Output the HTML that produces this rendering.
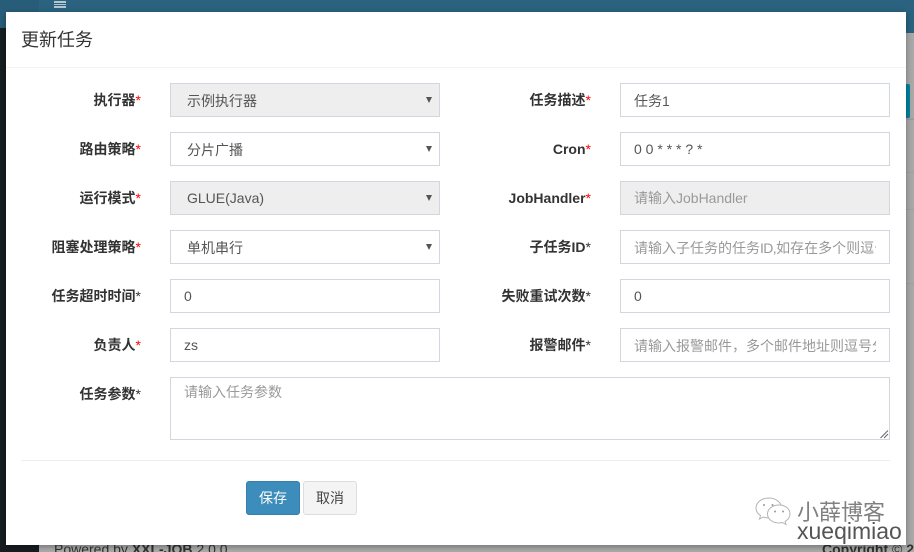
<!DOCTYPE html>
<html lang="zh">
<head>
<meta charset="utf-8">
<title>更新任务</title>
<style>
html,body{margin:0;padding:0;width:914px;height:552px;overflow:hidden;background:#adadad}
body{position:relative;font-family:"Liberation Sans","Noto Sans CJK SC",sans-serif;font-size:14px;color:#333}
div,span{box-sizing:border-box}
.a{position:absolute}
.modal{position:absolute;left:6px;top:12px;width:900px;height:533px;background:#fff;box-shadow:0 2px 6px rgba(0,0,0,.35)}
.lb{position:absolute;width:125px;height:20px;line-height:20px;text-align:right;font-weight:bold;color:#333;font-size:14px;white-space:nowrap}
.lb i{font-style:normal;color:#f00;font-weight:normal}
.lb b{font-weight:normal}
.f{position:absolute;width:270px;height:34px;border:1px solid #d2d6de;background:#fff;color:#555;line-height:32px;padding:0 13px;white-space:nowrap;overflow:hidden}
.f span{display:block;overflow:hidden;height:32px}
.f span.c{position:relative;top:1px}
.f.s{padding-left:16px}
.f.d{background:#eee}
.ph{color:#999}
.ar{position:absolute;right:7px;top:13px;width:0;height:0;border-left:3px solid transparent;border-right:3px solid transparent;border-top:6px solid #555}
</style>
</head>
<body>
<!-- background page -->
<div class="a" style="left:0;top:0;width:914px;height:33px;background:#2a627f"></div>
<div class="a" style="left:0;top:0;width:39px;height:28px;background:#285d79"></div>
<div class="a" style="left:0;top:28px;width:39px;height:524px;background:#171d20"></div>
<div class="a" style="left:54px;top:1px;width:12px;height:2px;background:#b5c6d0"></div>
<div class="a" style="left:54px;top:4px;width:12px;height:1px;background:#b5c6d0"></div>
<div class="a" style="left:54px;top:6px;width:12px;height:2px;background:#b5c6d0"></div>
<div class="a" style="left:906px;top:33px;width:8px;height:519px;background:#a9a9a9"></div>
<div class="a" style="left:906px;top:84px;width:4px;height:34px;background:#00829f;border-radius:0 2px 2px 0"></div>
<div class="a" style="left:906px;top:118px;width:8px;height:2px;background:#9d9d9d"></div>
<div class="a" style="left:906px;top:172px;width:8px;height:1px;background:#a0a0a0"></div>
<div class="a" style="left:906px;top:209px;width:8px;height:1px;background:#a0a0a0"></div>
<div class="a" style="left:906px;top:283px;width:8px;height:1px;background:#a0a0a0"></div>
<div class="a" style="left:54px;top:539px;font-size:14px;line-height:20px;color:#333;white-space:nowrap">Powered by <b>XXL-JOB</b> 2.0.0</div>
<div class="a" style="left:822px;top:539px;font-size:14px;line-height:20px;color:#333;white-space:nowrap"><b>Copyright</b> © <b>2</b></div>

<div class="modal"></div>

<div class="a" style="left:21px;top:27px;font-size:18px;line-height:26px;color:#333">更新任务</div>
<div class="a" style="left:6px;top:67px;width:900px;height:1px;background:#f4f4f4"></div>

<!-- left labels -->
<div class="lb" style="left:16px;top:90px">执行器<i>*</i></div>
<div class="lb" style="left:16px;top:139px">路由策略<i>*</i></div>
<div class="lb" style="left:16px;top:188px">运行模式<i>*</i></div>
<div class="lb" style="left:16px;top:237px">阻塞处理策略<i>*</i></div>
<div class="lb" style="left:16px;top:286px">任务超时时间<b>*</b></div>
<div class="lb" style="left:16px;top:335px">负责人<i>*</i></div>
<div class="lb" style="left:16px;top:384px">任务参数<b>*</b></div>

<!-- right labels -->
<div class="lb" style="left:466px;top:90px">任务描述<i>*</i></div>
<div class="lb" style="left:466px;top:139px">Cron<i>*</i></div>
<div class="lb" style="left:466px;top:188px">JobHandler<i>*</i></div>
<div class="lb" style="left:466px;top:237px">子任务ID<b>*</b></div>
<div class="lb" style="left:466px;top:286px">失败重试次数<b>*</b></div>
<div class="lb" style="left:466px;top:335px">报警邮件<b>*</b></div>

<!-- left fields -->
<div class="f s d" style="left:170px;top:83px"><span class="c">示例执行器</span><div class="ar"></div></div>
<div class="f s" style="left:170px;top:132px"><span class="c">分片广播</span><div class="ar"></div></div>
<div class="f s d" style="left:170px;top:181px"><span>GLUE(Java)</span><div class="ar"></div></div>
<div class="f s" style="left:170px;top:230px"><span class="c">单机串行</span><div class="ar"></div></div>
<div class="f" style="left:170px;top:279px"><span>0</span></div>
<div class="f" style="left:170px;top:328px"><span>zs</span></div>

<!-- right fields -->
<div class="f" style="left:620px;top:83px"><span class="c">任务1</span></div>
<div class="f" style="left:620px;top:132px"><span>0 0 * * * ? *</span></div>
<div class="f d" style="left:620px;top:181px"><span class="ph">请输入JobHandler</span></div>
<div class="f" style="left:620px;top:230px"><span class="ph c">请输入子任务的任务<u style="text-decoration:none;letter-spacing:-.6px">ID,</u>如存在多个则逗号分隔</span></div>
<div class="f" style="left:620px;top:279px"><span>0</span></div>
<div class="f" style="left:620px;top:328px"><span class="ph c">请输入报警邮件，多个邮件地址则逗号分隔</span></div>

<!-- textarea -->
<div class="f" style="left:170px;top:377px;width:720px;height:63px;line-height:20px;padding-top:4px"><span class="ph" style="height:20px">请输入任务参数</span>
<svg class="a" style="right:0;bottom:0" width="10" height="10" viewBox="0 0 10 10"><path d="M1.5 9 L9 1.5 M5 9 L9 5" stroke="#666" stroke-width="1" fill="none"/></svg></div>

<!-- footer -->
<div class="a" style="left:21px;top:460px;width:869px;height:1px;background:#eee"></div>
<div class="a" style="left:246px;top:481px;width:54px;height:34px;background:#3c8dbc;border:1px solid #367fa9;border-radius:3px;color:#fff;text-align:center;line-height:32px">保存</div>
<div class="a" style="left:303px;top:481px;width:54px;height:34px;background:#f4f4f4;border:1px solid #ddd;border-radius:3px;color:#444;text-align:center;line-height:32px">取消</div>

<!-- watermark -->
<svg class="a" style="left:754px;top:495px" width="38" height="34" viewBox="0 0 38 34" fill="#fff" stroke="#b4b4b4" stroke-width="1">
<path d="M15 3 C7.5 3 2 7.5 2 13 C2 16.2 3.8 18.8 6.5 20.6 L5.5 24 L9.5 22 C11 22.5 12.5 22.8 14 22.9 C17 24 25 14 27.5 11 C26 6.5 21 3 15 3 Z"/>
<path d="M25 10 C18.5 10 13.5 14 13.5 19 C13.5 24 18.5 28 25 28 C26.2 28 27.3 27.8 28.4 27.5 L32 29.5 L31.1 26.4 C33.7 24.8 36 22.2 36 19 C36 14 31.5 10 25 10 Z"/>
<circle cx="10" cy="10" r="1" fill="#999" stroke="none"/><circle cx="18.5" cy="10" r="1" fill="#999" stroke="none"/>
<circle cx="21" cy="16.5" r="1" fill="#999" stroke="none"/><circle cx="29" cy="16.5" r="1" fill="#999" stroke="none"/>
</svg>
<div class="a" style="left:797px;top:499px;font-size:22px;line-height:28px;color:#808080;white-space:nowrap">小薛博客</div>
<div class="a" style="left:797px;top:518px;font-size:23px;line-height:26px;color:#555;white-space:nowrap">xueqimiao</div>
</body>
</html>
